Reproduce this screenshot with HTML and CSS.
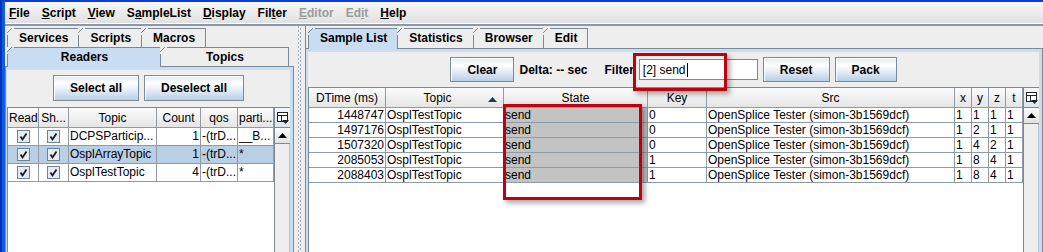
FILE: index.html
```html
<!DOCTYPE html>
<html>
<head>
<meta charset="utf-8">
<title>Tester</title>
<link rel="stylesheet" href="styles.css">
</head>
<body>
<div class="app">
  <div class="edge"></div>
  <div class="win">
    <div class="menubar">
      <span class="menu"><u>F</u>ile</span>
      <span class="menu"><u>S</u>cript</span>
      <span class="menu"><u>V</u>iew</span>
      <span class="menu">S<u>a</u>mpleList</span>
      <span class="menu"><u>D</u>isplay</span>
      <span class="menu">Fil<u>t</u>er</span>
      <span class="menu disabled"><u>E</u>ditor</span>
      <span class="menu disabled">Ed<u>i</u>t</span>
      <span class="menu"><u>H</u>elp</span>
    </div>
    <div class="menusep"></div>
    <div class="main">
      <div class="leftpane">
        <div class="tabrow">
          <div class="tab">Services</div><div class="tab">Scripts</div><div class="tab last">Macros</div>
        </div>
        <div class="tabrow">
          <div class="tab sel readers">Readers</div><div class="tab last topics">Topics</div>
        </div>
        <div class="tabbody left">
          <div class="panel">
            <div class="btnrow">
              <button class="btn tall">Select all</button>
              <button class="btn tall">Deselect all</button>
            </div>
            <div class="scrollpane">
              <div class="viewport">
                <table class="grid lgrid">
                  <colgroup>
                    <col class="w31"><col class="w30"><col class="w88"><col class="w44"><col class="w37"><col class="w36">
                  </colgroup>
                  <thead>
                    <tr><th>Read</th><th>Sh...</th><th>Topic</th><th>Count</th><th>qos</th><th>parti...</th></tr>
                  </thead>
                  <tbody>
                    <tr>
                      <td class="ctr"><svg class="cb" width="13" height="13" viewBox="0 0 13 13"><rect x="0.5" y="0.5" width="12" height="12" fill="#e4ebf3" stroke="#6f8296"/><path d="M3.5 6.5 L5.5 9.5 L9.5 3.5" fill="none" stroke="#1a1a1a" stroke-width="1.8"/></svg></td>
                      <td class="ctr"><svg class="cb" width="13" height="13" viewBox="0 0 13 13"><rect x="0.5" y="0.5" width="12" height="12" fill="#e4ebf3" stroke="#6f8296"/><path d="M3.5 6.5 L5.5 9.5 L9.5 3.5" fill="none" stroke="#1a1a1a" stroke-width="1.8"/></svg></td>
                      <td>DCPSParticip...</td><td class="num">1</td><td>-(trD...</td><td>__B...</td>
                    </tr>
                    <tr class="selrow">
                      <td class="ctr"><svg class="cb" width="13" height="13" viewBox="0 0 13 13"><rect x="0.5" y="0.5" width="12" height="12" fill="#e4ebf3" stroke="#6f8296"/><path d="M3.5 6.5 L5.5 9.5 L9.5 3.5" fill="none" stroke="#1a1a1a" stroke-width="1.8"/></svg></td>
                      <td class="ctr"><svg class="cb" width="13" height="13" viewBox="0 0 13 13"><rect x="0.5" y="0.5" width="12" height="12" fill="#e4ebf3" stroke="#6f8296"/><path d="M3.5 6.5 L5.5 9.5 L9.5 3.5" fill="none" stroke="#1a1a1a" stroke-width="1.8"/></svg></td>
                      <td>OsplArrayTopic</td><td class="num">1</td><td>-(trD...</td><td>*</td>
                    </tr>
                    <tr>
                      <td class="ctr"><svg class="cb" width="13" height="13" viewBox="0 0 13 13"><rect x="0.5" y="0.5" width="12" height="12" fill="#e4ebf3" stroke="#6f8296"/><path d="M3.5 6.5 L5.5 9.5 L9.5 3.5" fill="none" stroke="#1a1a1a" stroke-width="1.8"/></svg></td>
                      <td class="ctr"><svg class="cb" width="13" height="13" viewBox="0 0 13 13"><rect x="0.5" y="0.5" width="12" height="12" fill="#e4ebf3" stroke="#6f8296"/><path d="M3.5 6.5 L5.5 9.5 L9.5 3.5" fill="none" stroke="#1a1a1a" stroke-width="1.8"/></svg></td>
                      <td>OsplTestTopic</td><td class="num">4</td><td>-(trD...</td><td>*</td>
                    </tr>
                  </tbody>
                </table>
              </div>
              <div class="vscroll">
                <div class="corner"><svg width="12" height="12" viewBox="0 0 12 12"><rect x="0.5" y="0.5" width="10" height="9" fill="#fff" stroke="#222"/><line x1="0.5" y1="3.5" x2="10.5" y2="3.5" stroke="#222"/><line x1="4.5" y1="3.5" x2="4.5" y2="9.5" stroke="#222"/><polygon points="5,8 12,8 8.5,12" fill="#222"/></svg></div>
                <div class="arrowbtn"><svg width="9" height="5" viewBox="0 0 9 5"><polygon points="0,5 4.5,0 9,5" fill="#000"/></svg></div>
                <div class="track"></div>
              </div>
            </div>
          </div>
        </div>
      </div>
      <div class="divider"><div class="grip"></div></div>
      <div class="rightpane">
        <div class="tabrow rtabs">
          <div class="tab sel">Sample List</div><div class="tab">Statistics</div><div class="tab">Browser</div><div class="tab last">Edit</div>
        </div>
        <div class="tabbody right">
          <div class="panel">
            <div class="toolbar">
              <button class="btn">Clear</button>
              <span class="lbl delta">Delta: -- sec</span>
              <span class="lbl">Filter</span>
              <div class="field">[2] send<span class="caret"></span></div>
              <button class="btn">Reset</button>
              <button class="btn">Pack</button>
            </div>
            <div class="scrollpane">
              <div class="viewport">
                <table class="grid rgrid">
                  <colgroup>
                    <col class="w77"><col class="w118"><col class="w144"><col class="w59"><col class="w248"><col class="w17"><col class="w17"><col class="w17"><col class="w17">
                  </colgroup>
                  <thead>
                    <tr><th>DTime (ms)</th><th><svg class="sort" width="9" height="5" viewBox="0 0 9 5"><polygon points="0,5 4.5,0 9,5" fill="#2b3a4a"/></svg>Topic</th><th>State</th><th>Key</th><th>Src</th><th>x</th><th>y</th><th>z</th><th>t</th></tr>
                  </thead>
                  <tbody>
                    <tr><td class="num">1448747</td><td>OsplTestTopic</td><td class="state">send</td><td>0</td><td>OpenSplice Tester (simon-3b1569dcf)</td><td>1</td><td>1</td><td>1</td><td>1</td></tr>
                    <tr><td class="num">1497176</td><td>OsplTestTopic</td><td class="state">send</td><td>0</td><td>OpenSplice Tester (simon-3b1569dcf)</td><td>1</td><td>2</td><td>1</td><td>1</td></tr>
                    <tr><td class="num">1507320</td><td>OsplTestTopic</td><td class="state">send</td><td>0</td><td>OpenSplice Tester (simon-3b1569dcf)</td><td>1</td><td>4</td><td>2</td><td>1</td></tr>
                    <tr><td class="num">2085053</td><td>OsplTestTopic</td><td class="state">send</td><td>1</td><td>OpenSplice Tester (simon-3b1569dcf)</td><td>1</td><td>8</td><td>4</td><td>1</td></tr>
                    <tr><td class="num">2088403</td><td>OsplTestTopic</td><td class="state">send</td><td>1</td><td>OpenSplice Tester (simon-3b1569dcf)</td><td>1</td><td>8</td><td>4</td><td>1</td></tr>
                  </tbody>
                </table>
              </div>
              <div class="vscroll">
                <div class="corner"><svg width="12" height="12" viewBox="0 0 12 12"><rect x="0.5" y="0.5" width="10" height="9" fill="#fff" stroke="#222"/><line x1="0.5" y1="3.5" x2="10.5" y2="3.5" stroke="#222"/><line x1="4.5" y1="3.5" x2="4.5" y2="9.5" stroke="#222"/><polygon points="5,8 12,8 8.5,12" fill="#222"/></svg></div>
                <div class="arrowbtn"><svg width="9" height="5" viewBox="0 0 9 5"><polygon points="0,5 4.5,0 9,5" fill="#000"/></svg></div>
                <div class="track"></div>
              </div>
            </div>
          </div>
        </div>
      </div>
    </div>
  </div>
</div>
<div class="mark mark-filter"></div>
<div class="mark mark-state"></div>
</body>
</html>
```

FILE: styles.css
```css
* { box-sizing: border-box; }
html, body { margin: 0; padding: 0; }
body {
  width: 1043px;
  height: 252px;
  overflow: hidden;
  position: relative;
  background: #eeeeee;
  color: #000;
  font: 12px "Liberation Sans", Arial, sans-serif;
}
.app {
  display: flex;
  height: 252px;
  border-top: 2px solid #0b3fcf;
}
.edge {
  width: 5px;
  flex: none;
  background: linear-gradient(to right, #0032b8 0 2px, #1259e4 2px 5px);
}
.win {
  flex: 1;
  min-width: 0;
  display: flex;
  flex-direction: column;
}
.menubar {
  height: 22px;
  flex: none;
  display: flex;
  align-items: center;
  background: linear-gradient(#f7f7f7, #e1e1e1);
  border-bottom: 1px solid #ffffff;
  font-weight: bold;
}
.menu { padding: 0 8px 0 4px; white-space: nowrap; }
.menu.disabled { color: #9b9b9b; }
.menusep { height: 2px; flex: none; background: #8c99a5; }
.main { flex: 1; min-height: 0; display: flex; }

/* tabs */
.leftpane {
  width: 289px;
  flex: none;
  padding-top: 2px;
  display: flex;
  flex-direction: column;
}
.tabrow {
  display: flex;
  flex: none;
  height: 19px;
  padding-left: 2px;
}
.tab {
  --tabbg: #eeeeee;
  position: relative;
  height: 19px;
  line-height: 18px;
  padding: 0 10px 0 11px;
  border-top: 1px solid #7a8a99;
  border-left: 1px solid #7a8a99;
  background: var(--tabbg);
  font-weight: bold;
  text-align: center;
  white-space: nowrap;
}
.tab.last { border-right: 1px solid #7a8a99; }
.tab::before {
  content: "";
  position: absolute;
  left: -1px;
  top: -1px;
  width: 7px;
  height: 7px;
  background: linear-gradient(135deg, #eeeeee 0 3px, #7a8a99 3px 4px, var(--tabbg) 4px);
}
.tab.sel {
  --tabbg: #c8ddf2;
  height: 20px;
  z-index: 1;
}
.readers { width: 153px; }
.topics { width: 129px; }
.rtabs { height: 20px; padding-left: 2px; }
.rtabs .tab { height: 20px; line-height: 19px; }
.rtabs .tab.sel { height: 21px; }

.tabbody {
  flex: 1;
  min-height: 0;
  display: flex;
  background: #c8ddf2;
  border-top: 1px solid #7a8a99;
  border-right: 1px solid #7a8a99;
}
.tabbody.left {
  border-left: 1px solid #7a8a99;
  padding: 3px 3px 0 1px;
}
.tabbody.right { padding: 3px 3px 0 2px; }
.panel {
  flex: 1;
  min-width: 0;
  display: flex;
  flex-direction: column;
  background: #eeeeee;
}

/* buttons */
.btn {
  margin: 0;
  height: 25px;
  padding: 0 16px;
  border: 1px solid #7a8a99;
  background: linear-gradient(#dde8f3, #ffffff 30%, #e8eff7 55%, #b8cfe5);
  box-shadow: inset 1px 1px 0 #ffffff;
  font: bold 12px "Liberation Sans", Arial, sans-serif;
  color: #000;
}
.btn.tall { height: 26px; }
.btnrow {
  display: flex;
  justify-content: center;
  gap: 5px;
  padding: 5px 0 6px;
  flex: none;
}
.toolbar {
  display: flex;
  justify-content: center;
  align-items: center;
  gap: 5px;
  padding: 5px 0;
  flex: none;
}
.lbl { font-weight: bold; white-space: nowrap; }
.lbl.delta { margin-right: 12px; }
.field {
  width: 119px;
  height: 21px;
  border: 1px solid #7a8a99;
  background: #fff;
  padding: 0 3px;
  display: flex;
  align-items: center;
  white-space: nowrap;
}
.caret { display: inline-block; width: 1px; height: 14px; background: #000; margin-left: 1px; }

/* divider */
.divider {
  width: 11px;
  flex: none;
  display: flex;
  justify-content: center;
}
.grip {
  width: 4px;
  background-image: linear-gradient(#a2abb4 50%, transparent 50%), linear-gradient(#a2abb4 50%, transparent 50%);
  background-size: 1px 4px, 1px 4px;
  background-position: 0 0, 2px 2px;
  background-repeat: repeat-y, repeat-y;
}
.rightpane {
  flex: 1;
  min-width: 0;
  padding-top: 2px;
  border-left: 1px solid #7a8a99;
  display: flex;
  flex-direction: column;
}

/* tables */
.scrollpane {
  flex: 1;
  min-height: 0;
  display: flex;
  background: #ffffff;
  border-top: 1px solid #7a8a99;
  border-left: 1px solid #7a8a99;
}
.viewport { flex: 1; min-width: 0; }
.grid {
  border-collapse: separate;
  border-spacing: 0;
  table-layout: fixed;
}
.lgrid { width: 266px; }
.rgrid { width: 714px; }
.w17 { width: 17px; }
.w30 { width: 30px; }
.w31 { width: 31px; }
.w36 { width: 36px; }
.w37 { width: 37px; }
.w44 { width: 44px; }
.w59 { width: 59px; }
.w77 { width: 77px; }
.w88 { width: 88px; }
.w118 { width: 118px; }
.w144 { width: 144px; }
.w248 { width: 248px; }
.grid th {
  height: 20px;
  padding: 0 1px;
  font-weight: normal;
  text-align: center;
  white-space: nowrap;
  overflow: hidden;
  background: linear-gradient(#fbfbfb, #e5e5e5);
  border-right: 1px solid #8e9aa6;
  border-bottom: 1px solid #8e9aa6;
}
.grid td {
  height: 15px;
  padding: 0 1px;
  line-height: 14px;
  white-space: nowrap;
  overflow: hidden;
  border-right: 1px solid #8e9aa6;
  border-bottom: 1px solid #8e9aa6;
}
.lgrid td { height: 18px; line-height: 17px; }
.grid td.num { text-align: right; }
.grid td.ctr { text-align: center; }
.grid td.state { background: #c3c3c3; }
.selrow td { background: #b8cfe5; }
.cb { display: inline-block; vertical-align: middle; }
.sort { float: right; margin: 6px 5px 0 0; }

.vscroll {
  width: 16px;
  flex: none;
  display: flex;
  flex-direction: column;
  background: #eeeeee;
  border-left: 1px solid #7a8a99;
}
.corner {
  height: 20px;
  flex: none;
  display: flex;
  align-items: center;
  justify-content: center;
  background: linear-gradient(#f4f6f9, #dfe5ec);
  border-bottom: 1px solid #7a8a99;
}
.arrowbtn {
  height: 16px;
  flex: none;
  display: flex;
  align-items: center;
  justify-content: center;
  background: linear-gradient(#fafafa, #e2e2e2);
  border-bottom: 1px solid #7a8a99;
}
.track { flex: 1; border-right: 1px solid #b8c5d2; }

/* annotation marks */
.mark {
  position: absolute;
  border: 3px solid #c1000f;
  box-shadow: 3px 3px 5px rgba(0, 0, 0, 0.35);
}
.mark-filter { left: 633px; top: 53px; width: 94px; height: 38px; }
.mark-state { left: 503px; top: 104px; width: 139px; height: 96px; }
```
